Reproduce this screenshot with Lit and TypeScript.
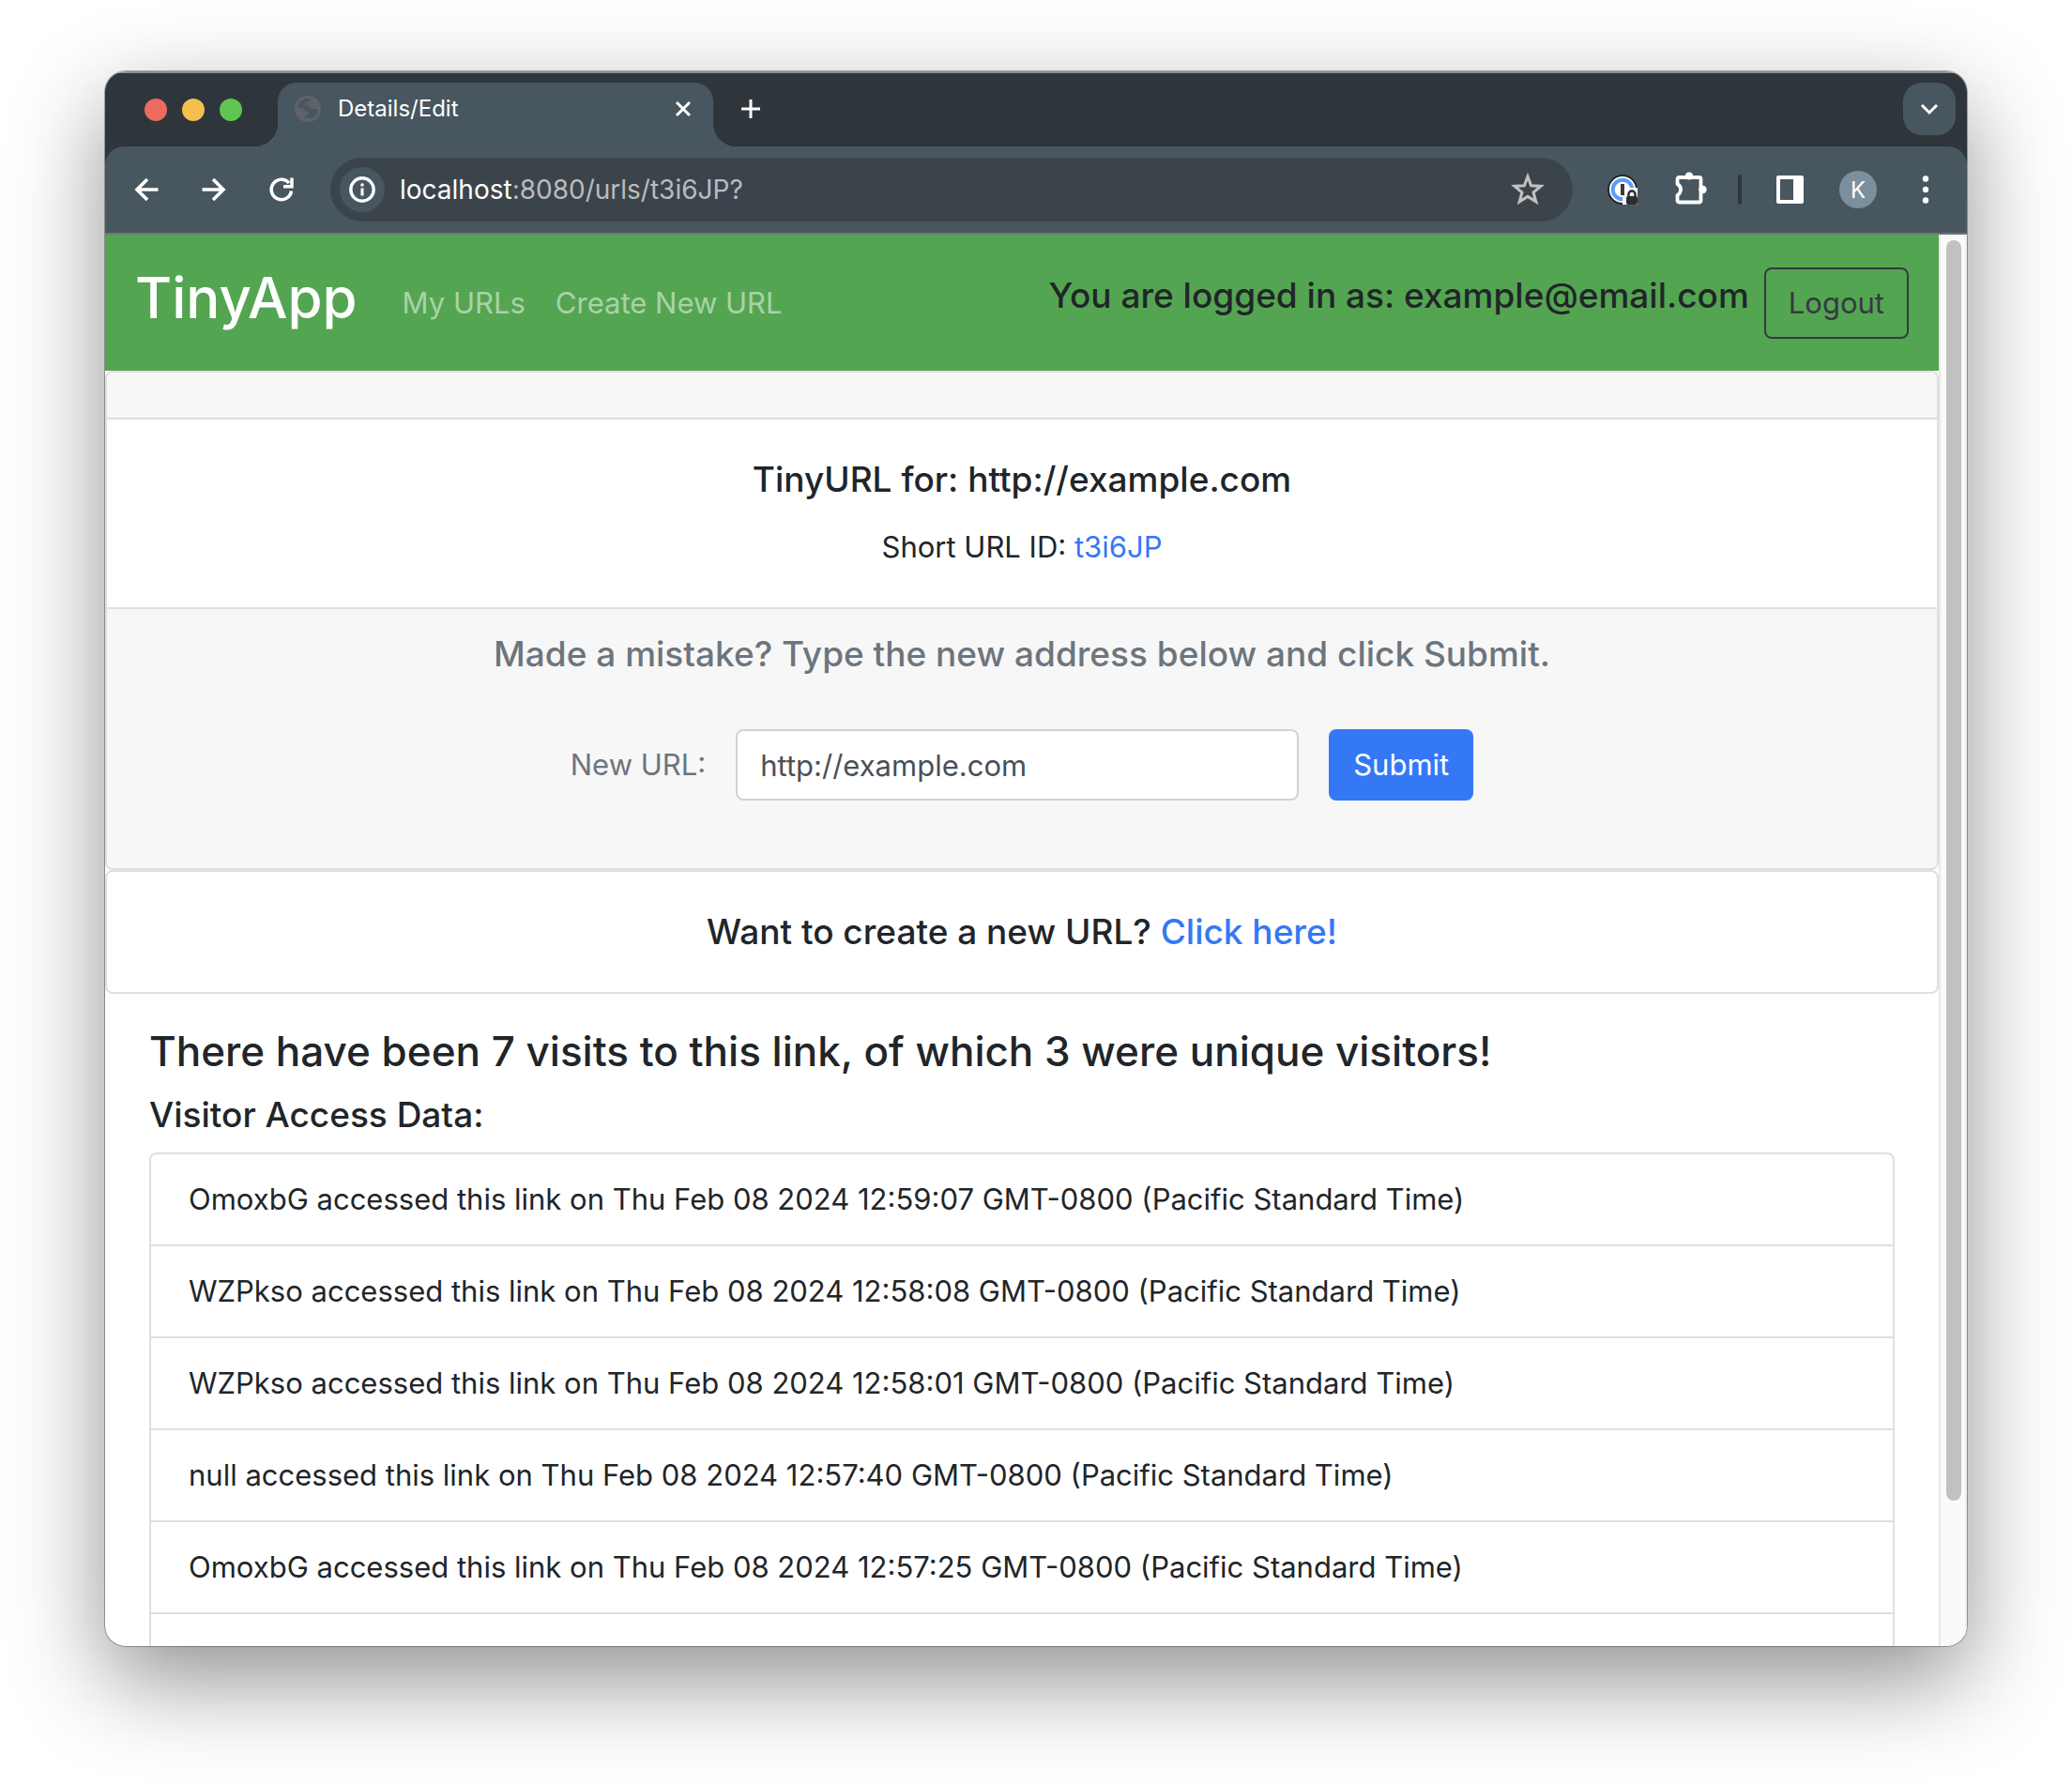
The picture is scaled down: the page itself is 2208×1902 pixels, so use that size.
import { LitElement, html, css, svg } from "lit";
import { customElement, state } from "lit/decorators.js";

interface Visit {
  visitor: string;
  time: string;
}

const VISITS: Visit[] = [
  { visitor: "OmoxbG", time: "Thu Feb 08 2024 12:59:07 GMT-0800 (Pacific Standard Time)" },
  { visitor: "WZPkso", time: "Thu Feb 08 2024 12:58:08 GMT-0800 (Pacific Standard Time)" },
  { visitor: "WZPkso", time: "Thu Feb 08 2024 12:58:01 GMT-0800 (Pacific Standard Time)" },
  { visitor: "null", time: "Thu Feb 08 2024 12:57:40 GMT-0800 (Pacific Standard Time)" },
  { visitor: "OmoxbG", time: "Thu Feb 08 2024 12:57:25 GMT-0800 (Pacific Standard Time)" },
];

const icon = (size: number, body: unknown) => html`
  <svg class="icon" width=${size} height=${size} viewBox="0 0 ${size} ${size}" fill="none" aria-hidden="true">${body}</svg>
`;

const globe = icon(28, svg`
  <circle cx="14" cy="14" r="14" fill="#5f6368"/>
  <path d="M3 13Q3.500 5 12 3L17 3Q16.500 6 14 6.500L11.500 7V10H14Q16 10 16.500 13L20 14.300H24.800Q24 22 18 24L11 24V21.500L15 20V17.500L11.500 17Q10.500 13 8 13z" fill="#48565f"/>
`);
const close = icon(24, svg`<path d="M5 5l14 14M19 5L5 19" stroke="#fff" stroke-width="3"/>`);
const plus = icon(24, svg`<path d="M12 2v20M2 12h20" stroke="#fff" stroke-width="3"/>`);
const chevron = icon(24, svg`<path d="M4 8l8 8 8-8" stroke="#fff" stroke-width="3"/>`);
const back = icon(32, svg`<path d="M28.500 16H6.500M17 5L6 16l11 11" stroke="#fff" stroke-width="3.600"/>`);
const forward = icon(32, svg`<path d="M3.500 16h22M15 5l11 11-11 11" stroke="#fff" stroke-width="3.600"/>`);
const reload = icon(32, svg`
  <path d="M26.500 17.500A10.700 10.700 0 1 1 24 9" stroke="#fff" stroke-width="3.600"/>
  <path d="M28.700 3.500v11H18v-3.600h7.200V3.500z" fill="#fff"/>
`);
const info = icon(28, svg`
  <circle cx="14" cy="14" r="12.200" stroke="#fff" stroke-width="3.400"/>
  <path d="M14 12.500v8" stroke="#fff" stroke-width="3"/><circle cx="14" cy="9" r="1.800" fill="#fff"/>
`);
const star = icon(36, svg`
  <path d="M18 4l3.600 9.800 10.400.6-8 6.600 2.800 10L18 25.400 9.200 31 12 21l-8-6.600 10.400-.6z" stroke="#c1c1c1" stroke-width="3"/>
`);
const vault = icon(36, svg`
  <circle cx="17" cy="18" r="15" fill="#fff" stroke="#20282c" stroke-width="2"/>
  <circle cx="17" cy="18" r="10.300" stroke="#5b9dfa" stroke-width="4"/>
  <path d="M17 22h3l5-6h8v18H17z" fill="#f4f4f4"/>
  <rect x="15" y="12" width="4" height="12" fill="#3a3a3a"/>
  <rect x="21" y="25" width="12" height="9" rx="2" fill="#2e2e2e"/>
  <path d="M23.500 26v-3a3.500 3.500 0 0 1 7 0v3" stroke="#2e2e2e" stroke-width="2.500"/>
`);
const puzzle = icon(32, svg`
  <path d="M3.500 10V5q0-2 2-2h21q2 0 2 2v22.500q0 2-2 2h-21q-2 0-2-2V22q3.500-2 3.500-6t-3.500-6z" stroke="#fff" stroke-width="3.800" stroke-linejoin="round"/>
  <circle cx="16" cy="1.500" r="4" fill="#fff"/><circle cx="30.500" cy="16" r="4.200" fill="#fff"/>
`);
const panel = icon(32, svg`
  <path fill-rule="evenodd" d="M3 1h25q2 0 2 2v26q0 2-2 2H3q-2 0-2-2V3q0-2 2-2zM5 5v22h14V5z" fill="#fff"/>
`);
const dots = icon(32, svg`
  <circle cx="16" cy="4.500" r="3.200" fill="#fff"/><circle cx="16" cy="16" r="3.200" fill="#fff"/><circle cx="16" cy="27.500" r="3.200" fill="#fff"/>
`);

@customElement("app-root")
export class AppRoot extends LitElement {
  @state() private newUrl = "http://example.com";

  static styles = css`
    :host { display: block; font-family: Inter, "Liberation Sans", sans-serif; color: #212529; background: #fff; }
    * { box-sizing: border-box; }
    h1, h2, h3, p, ul { margin: 0; padding: 0; }
    h1, h2, h3 { font-weight: 500; }
    a { color: #3478f6; text-decoration: none; }
    button { font: inherit; margin: 0; padding: 0; border: 0; background: none; color: inherit; display: flex; align-items: center; justify-content: center; }
    .icon { display: block; flex: none; overflow: visible; }

    .desktop { height: 100vh; padding: 76px 112px 148px; overflow: hidden; }
    .window { height: 100%; display: flex; flex-direction: column; overflow: hidden; border-radius: 22px; background: #fff;
      box-shadow: 0 0 0 1px rgba(0, 0, 0, 0.3), 0 36px 100px rgba(0, 0, 0, 0.44); }

    .tabs { display: flex; align-items: flex-end; height: 80px; padding: 0 12px 0 42px; background: linear-gradient(#8b9094 0 2px, #2e363c 2px); flex: none; }
    .lights { display: flex; gap: 16px; height: 78px; align-items: center; margin-right: 38px; }
    .light { width: 24px; height: 24px; border-radius: 50%; }
    .red { background: #ed6a5e; }
    .yellow { background: #f5bf4f; }
    .green { background: #61c554; }
    .tab { position: relative; display: flex; align-items: center; width: 464px; height: 68px; padding: 0 20px 12px 18px; background: #48565f; border-radius: 20px 20px 0 0; color: #fff; font-size: 24px; }
    .tab::before, .tab::after { content: ""; position: absolute; bottom: 0; width: 24px; height: 24px; }
    .tab::before { right: 100%; background: radial-gradient(circle at 0 0, transparent 24px, #48565f 24px); }
    .tab::after { left: 100%; background: radial-gradient(circle at 100% 0, transparent 24px, #48565f 24px); }
    .tab-title { flex: 1; margin-left: 18px; line-height: 32px; }
    .new-tab { width: 48px; height: 56px; margin: 0 auto 12px 16px; }
    .tab-list { width: 56px; height: 56px; margin-bottom: 12px; border-radius: 20px; background: #48565f; }

    .toolbar-wrap { background: #2e363c; flex: none; }
    .toolbar { display: flex; align-items: center; height: 94px; padding: 0 28px; background: #48565f; border-bottom: 2px solid #6c7880; border-radius: 20px 20px 0 0; }
    .nav-buttons { display: flex; gap: 40px; margin-right: 36px; }
    .omnibox { display: flex; align-items: center; flex: 1; height: 68px; padding: 0 30px 0 10px; border-radius: 34px; background: #3c444b; }
    .site-info { width: 48px; height: 48px; border-radius: 50%; background: #48565f; }
    .address { flex: 1; margin-left: 16px; font-size: 28px; line-height: 40px; color: #b9bcbf; }
    .address b { font-weight: 400; color: #fff; }
    .actions { display: flex; align-items: center; gap: 36px; margin-left: 36px; }
    .divider { width: 4px; height: 32px; border-radius: 2px; background: #2e363c; }
    .avatar { width: 40px; height: 40px; border-radius: 50%; background: #7b8f9c; color: #fff; font-size: 24px; }

    .viewport { flex: 1; min-height: 0; display: flex; }
    .page { flex: 1; min-width: 0; overflow: hidden; font-size: 31px; line-height: 48px; }
    .track { width: 30px; padding: 6px 4px 6px 6px; border-left: 2px solid #e8e8e8; border-right: 2px solid #f0f0f0; background: #fafafa; }
    .thumb { width: 16px; height: 90%; border-radius: 8px; background: #c1c1c1; }

    .navbar { display: flex; align-items: center; height: 145px; padding: 0 32px; background: #54a551; }
    .brand { color: #fff; font-size: 60px; line-height: 76px; font-weight: 500; margin: 0 48px 12px 0; }
    .links { display: flex; gap: 32px; margin-right: auto; }
    .links a { color: rgba(255, 255, 255, 0.5); }
    .user { font-size: 37px; line-height: 48px; margin: 0 16px 16px 0; }
    .logout { height: 76px; padding: 0 24px; border: 2px solid #343a40; border-radius: 8px; color: #343a40; }

    .card { border: 2px solid #dfdfdf; border-radius: 8px; text-align: center; background: #fff; overflow: hidden; }
    .card-header { height: 50px; background: #f7f7f7; border-bottom: 2px solid #dfdfdf; }
    .card-body { padding: 40px; }
    .card-footer { padding: 24px 48px 72px; background: #f7f7f7; border-top: 2px solid #dfdfdf; color: #6c757d; }
    .title { font-size: 37px; line-height: 48px; }
    .short { margin-top: 24px; }
    .form { display: flex; justify-content: center; align-items: center; gap: 32px; margin-top: 56px; }
    .field { width: 600px; height: 76px; padding: 0 24px; border: 2px solid #ced4da; border-radius: 8px; background: #fff; font: inherit; color: #495057; outline: none; }
    .submit { height: 76px; padding: 0 26px; border-radius: 8px; background: #3478f6; color: #fff; }

    .stats { padding: 34px 47px 0; }
    .summary { font-size: 44px; line-height: 55px; }
    .stats .title { margin: 16px 0; }
    .list { list-style: none; border: 2px solid #dfdfdf; border-radius: 8px; }
    .list li { min-height: 98px; padding: 24px 40px; border-bottom: 2px solid #dfdfdf; }
    .list li:last-child { border-bottom: 0; }
  `;

  render() {
    return html`
      <div class="desktop">
        <div class="window">
          <div class="tabs">
            <div class="lights">
              <span class="light red"></span><span class="light yellow"></span><span class="light green"></span>
            </div>
            <div class="tab">
              ${globe}<span class="tab-title">Details/Edit</span>
              <button aria-label="Close tab">${close}</button>
            </div>
            <button class="new-tab" aria-label="New tab">${plus}</button>
            <button class="tab-list" aria-label="Search tabs">${chevron}</button>
          </div>
          <div class="toolbar-wrap">
            <div class="toolbar">
              <div class="nav-buttons">
                <button aria-label="Back">${back}</button>
                <button aria-label="Forward">${forward}</button>
                <button aria-label="Reload">${reload}</button>
              </div>
              <div class="omnibox">
                <button class="site-info" aria-label="Site information">${info}</button>
                <span class="address"><b>localhost</b>:8080/urls/t3i6JP?</span>
                <button aria-label="Bookmark">${star}</button>
              </div>
              <div class="actions">
                <button aria-label="Password manager">${vault}</button>
                <button aria-label="Extensions">${puzzle}</button>
                <span class="divider"></span>
                <button aria-label="Side panel">${panel}</button>
                <button class="avatar">K</button>
                <button aria-label="Menu">${dots}</button>
              </div>
            </div>
          </div>
          <div class="viewport">
            <main class="page">
              <nav class="navbar">
                <a class="brand" href="#">TinyApp</a>
                <div class="links"><a href="#">My URLs</a><a href="#">Create New URL</a></div>
                <h3 class="user">You are logged in as: example@email.com</h3>
                <button class="logout">Logout</button>
              </nav>
              <section class="card">
                <div class="card-header"></div>
                <div class="card-body">
                  <h2 class="title">TinyURL for: http://example.com</h2>
                  <p class="short">Short URL ID: <a href="#">t3i6JP</a></p>
                </div>
                <div class="card-footer">
                  <h2 class="title">Made a mistake? Type the new address below and click Submit.</h2>
                  <form class="form" @submit=${(e: Event) => e.preventDefault()}>
                    <label for="new-url">New URL:</label>
                    <input class="field" id="new-url" type="text" .value=${this.newUrl}
                      @input=${(e: Event) => (this.newUrl = (e.target as HTMLInputElement).value)} />
                    <button class="submit" type="submit">Submit</button>
                  </form>
                </div>
              </section>
              <section class="card">
                <div class="card-body">
                  <h2 class="title">Want to create a new URL? <a href="#">Click here!</a></h2>
                </div>
              </section>
              <section class="stats">
                <h1 class="summary">There have been 7 visits to this link, of which 3 were unique visitors!</h1>
                <h2 class="title">Visitor Access Data:</h2>
                <ul class="list">
                  ${VISITS.map((v) => html`<li>${v.visitor} accessed this link on ${v.time}</li>`)}
                  <li></li>
                </ul>
              </section>
            </main>
            <div class="track"><div class="thumb"></div></div>
          </div>
        </div>
      </div>
    `;
  }
}
